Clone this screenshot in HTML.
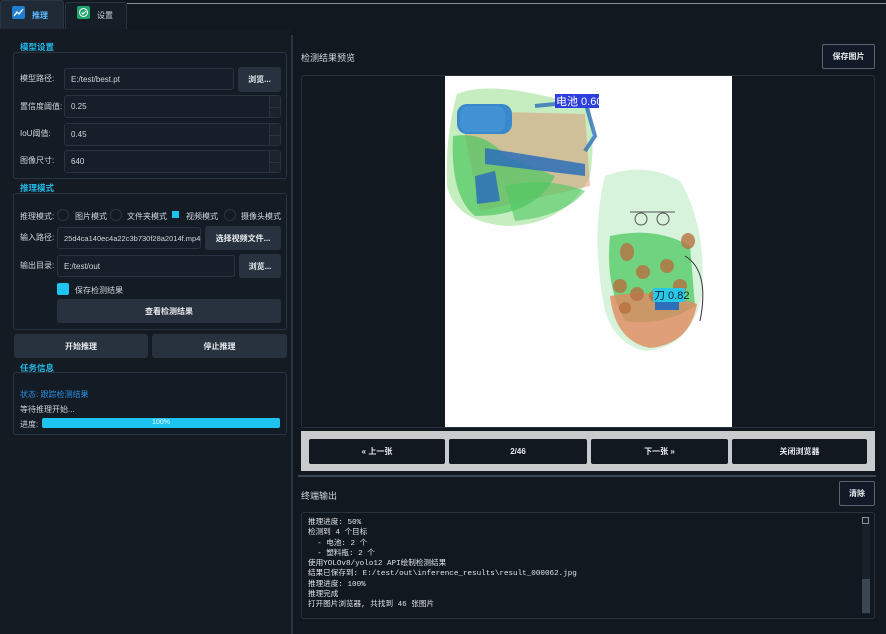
<!DOCTYPE html>
<html><head><meta charset="utf-8"><style>
*{box-sizing:border-box;margin:0;padding:0}
body{width:886px;height:634px;background:#111820;font-family:"Liberation Sans","Noto Sans CJK SC",sans-serif;color:#d8dde2;font-size:8px;position:relative;overflow:hidden}
.a{position:absolute}
.lbl{color:#1fb8e6;font-size:8.5px;font-weight:bold}
.box{border:1px solid #2a3440;border-radius:3px;background:#131b24}
.inp{background:#161f29;border:1px solid #2a3440;border-radius:3px;padding-left:6px;display:flex;align-items:center;font-size:8px;color:#d0d5da}
.btn{background:#28323e;border-radius:3px;display:flex;align-items:center;justify-content:center;font-size:8px;color:#e6eaee;font-weight:bold}
.spin{position:absolute;right:0;top:0;width:11px;height:100%;border-left:1px solid #2a3440;background:#1b242e}
.spin:after{content:"";position:absolute;left:0;right:0;top:50%;border-top:1px solid #2a3440}
.t{font-size:8px;color:#d0d5da}
.radio{width:12px;height:12px;border-radius:50%;border:1px solid #2a3440;background:#121a22}
.nb{background:#121820;border-radius:2px;display:flex;align-items:center;justify-content:center;color:#e6eaee;font-size:8px;font-weight:bold}
.mono{font-family:"Liberation Mono","Noto Sans CJK SC",monospace;font-size:7.6px;line-height:10.3px;color:#e0e4e8;white-space:pre}
</style></head><body>
<div class="a" style="left:127px;top:3px;width:759px;height:1px;background:#8a939c"></div>
<div class="a" style="left:0;top:0;width:64px;height:29px;background:#1f2a36;border:1px solid #2a3440;border-bottom:none;border-radius:3px 3px 0 0"></div>
<div class="a" style="left:12px;top:6px;width:13px;height:13px;background:#1e7fd0;border-radius:2px"><svg width="13" height="13"><path d="M2 10 L5 6 L7 8 L11 3" stroke="#fff" stroke-width="1.3" fill="none"/></svg></div>
<div class="a" style="left:32px;top:10px;color:#5ab8ff;font-weight:bold;font-size:8px">推理</div>
<div class="a" style="left:65px;top:2px;width:62px;height:27px;background:#151d26;border:1px solid #2a3440;border-bottom:none;border-radius:3px 3px 0 0"></div>
<div class="a" style="left:77px;top:6px;width:13px;height:13px;background:#1ea56e;border-radius:2px"><svg width="13" height="13"><circle cx="6.5" cy="6.5" r="4" stroke="#fff" fill="none" stroke-width="1"/><path d="M4.5 6.5 L6 8 L9 5" stroke="#fff" stroke-width="1.2" fill="none"/></svg></div>
<div class="a" style="left:97px;top:10px;color:#d0d5da;font-size:8px">设置</div>
<div class="a" style="left:0;top:29px;width:290px;height:605px;background:#141b23"></div>
<div class="a" style="left:291px;top:35px;width:2px;height:599px;background:#2c3642"></div>

<div class="a lbl" style="left:20px;top:41px">模型设置</div>
<div class="a box" style="left:13px;top:52px;width:274px;height:127px"></div>
<div class="a t" style="left:20px;top:73px">模型路径:</div>
<div class="a inp" style="left:64px;top:68px;width:170px;height:22px">E:/test/best.pt</div>
<div class="a btn" style="left:238px;top:67px;width:43px;height:25px">浏览...</div>
<div class="a t" style="left:20px;top:101px">置信度阈值:</div>
<div class="a inp" style="left:64px;top:95px;width:217px;height:23px">0.25<div class="spin"></div></div>
<div class="a t" style="left:20px;top:128px">IoU阈值:</div>
<div class="a inp" style="left:64px;top:123px;width:217px;height:23px">0.45<div class="spin"></div></div>
<div class="a t" style="left:20px;top:155px">图像尺寸:</div>
<div class="a inp" style="left:64px;top:150px;width:217px;height:23px">640<div class="spin"></div></div>

<div class="a lbl" style="left:20px;top:182px">推理模式</div>
<div class="a box" style="left:13px;top:193px;width:274px;height:137px"></div>
<div class="a t" style="left:20px;top:211px">推理模式:</div>
<div class="a radio" style="left:57px;top:209px"></div>
<div class="a t" style="left:75px;top:211px">图片模式</div>
<div class="a radio" style="left:110px;top:209px"></div>
<div class="a t" style="left:127px;top:211px">文件夹模式</div>
<div class="a" style="left:172px;top:211px;width:7px;height:7px;background:#1fc3ef"></div>
<div class="a t" style="left:186px;top:211px">视频模式</div>
<div class="a radio" style="left:224px;top:209px"></div>
<div class="a t" style="left:241px;top:211px">摄像头模式</div>
<div class="a t" style="left:20px;top:232px">输入路径:</div>
<div class="a inp" style="left:57px;top:227px;width:144px;height:22px;font-size:7.5px">25d4ca140ec4a22c3b730f28a2014f.mp4</div>
<div class="a btn" style="left:205px;top:226px;width:76px;height:24px">选择视频文件...</div>
<div class="a t" style="left:20px;top:260px">输出目录:</div>
<div class="a inp" style="left:57px;top:255px;width:178px;height:22px">E:/test/out</div>
<div class="a btn" style="left:239px;top:254px;width:42px;height:24px">浏览...</div>
<div class="a" style="left:57px;top:283px;width:12px;height:12px;background:#1fc3ef;border-radius:2px"></div>
<div class="a t" style="left:75px;top:285px">保存检测结果</div>
<div class="a btn" style="left:57px;top:299px;width:224px;height:24px">查看检测结果</div>

<div class="a btn" style="left:14px;top:334px;width:134px;height:24px">开始推理</div>
<div class="a btn" style="left:152px;top:334px;width:135px;height:24px">停止推理</div>

<div class="a lbl" style="left:20px;top:362px">任务信息</div>
<div class="a box" style="left:13px;top:372px;width:274px;height:63px"></div>
<div class="a" style="left:20px;top:389px;color:#2a8ee0;font-size:8px">状态: 跟踪检测结果</div>
<div class="a t" style="left:20px;top:404px">等待推理开始...</div>
<div class="a t" style="left:20px;top:419px">进度:</div>
<div class="a" style="left:42px;top:418px;width:238px;height:10px;background:#1fc3ef;border-radius:2px;color:#e8f8ff;font-size:7px;text-align:center;line-height:10px">100%</div>

<div class="a" style="left:301px;top:51px;font-size:9px;color:#d0d5da">检测结果预览</div>
<div class="a nb" style="left:822px;top:44px;width:53px;height:25px;border:1px solid #5a6470;background:#111a26">保存图片</div>
<div class="a" style="left:301px;top:75px;width:574px;height:353px;border:1px solid #28323c;border-radius:3px;background:#111820"></div>
<svg class="a" style="left:445px;top:76px" width="287" height="351" viewBox="0 0 287 351">
<rect width="287" height="351" fill="#fefefe"/>
<path d="M12 18 Q40 6 100 20 L145 30 Q150 70 145 100 Q120 150 60 150 Q10 145 2 110 Q0 60 12 18 Z" fill="#b8e8b0" opacity=".8"/>
<path d="M15 35 L140 38 L145 110 L35 135 Z" fill="#d89a78" opacity=".55"/>
<path d="M8 60 Q40 55 60 80 L110 100 Q90 140 30 140 Q5 120 8 60 Z" fill="#4cc860" opacity=".7"/>
<path d="M60 110 Q100 100 140 115 Q120 140 70 145Z" fill="#4cc860" opacity=".6"/>
<rect x="12" y="28" width="55" height="30" rx="10" fill="#3a88cc"/>
<rect x="15" y="30" width="45" height="26" rx="8" fill="#4a9ad8" opacity=".6"/>
<rect x="185" y="165" width="0" height="0"/>
<path d="M30 100 L50 95 L55 125 L32 128Z" fill="#2d6fb8" opacity=".85"/>
<path d="M40 72 L140 88 L140 100 L40 88 Z" fill="#2d6fb8" opacity=".85"/>
<path d="M90 30 L140 25 L150 60 L140 75" stroke="#2d6fb8" stroke-width="4" fill="none" opacity=".8"/>
<rect x="185" y="40" width="0" height="0"/>
<rect x="110" y="18" width="44" height="14" fill="#2c3ee0"/>
<text x="111" y="29" font-size="11" fill="#fff" font-family="Liberation Sans,Noto Sans CJK SC,sans-serif">电池 0.60</text>
<path d="M160 100 Q200 85 235 105 Q262 150 257 220 Q245 272 200 275 Q170 268 160 235 Q145 160 160 100 Z" fill="#cdf0d2" opacity=".8"/>
<path d="M165 160 Q210 150 245 170 L250 230 Q220 250 180 245 Q160 210 165 160Z" fill="#4cc860" opacity=".75"/>
<path d="M165 220 Q210 212 252 228 Q245 268 205 272 Q170 265 165 220Z" fill="#e08a60" opacity=".8"/>
<g fill="#b87040" opacity=".8"><ellipse cx="182" cy="176" rx="7" ry="9"/><ellipse cx="243" cy="165" rx="7" ry="8"/><circle cx="175" cy="210" r="7"/><circle cx="192" cy="218" r="7"/><circle cx="210" cy="220" r="6"/><circle cx="235" cy="210" r="7"/><circle cx="222" cy="190" r="7"/><circle cx="198" cy="196" r="7"/><circle cx="180" cy="232" r="6"/></g>
<path d="M185 136 L230 136" stroke="#555" stroke-width="1"/><circle cx="196" cy="143" r="6" fill="none" stroke="#555"/><circle cx="218" cy="143" r="6" fill="none" stroke="#555"/>
<path d="M240 180 Q265 195 255 245" stroke="#333" fill="none"/>
<rect x="208" y="212" width="32" height="14" fill="#28c8e8"/>
<text x="209" y="223" font-size="11" fill="#123" font-family="Liberation Sans,Noto Sans CJK SC,sans-serif">刀 0.82</text>
<rect x="210" y="226" width="24" height="8" fill="#2d6fb8"/>
</svg>
<div class="a" style="left:301px;top:431px;width:574px;height:40px;background:#c8cbce"></div>
<div class="a nb" style="left:309px;top:439px;width:136px;height:25px">« 上一张</div>
<div class="a nb" style="left:449px;top:439px;width:138px;height:25px">2/46</div>
<div class="a nb" style="left:591px;top:439px;width:137px;height:25px">下一张 »</div>
<div class="a nb" style="left:732px;top:439px;width:135px;height:25px">关闭浏览器</div>
<div class="a" style="left:298px;top:475px;width:578px;height:2px;background:#3a4654"></div>
<div class="a" style="left:301px;top:489px;font-size:9px;color:#d0d5da">终端输出</div>
<div class="a nb" style="left:839px;top:481px;width:36px;height:25px;border:1px solid #5a6470;background:#111a26">清除</div>
<div class="a" style="left:301px;top:512px;width:574px;height:107px;border:1px solid #28323c;border-radius:3px;background:#111820"></div>
<div class="a mono" style="left:308px;top:518px">推理进度: 50%
检测到 4 个目标
  - 电池: 2 个
  - 塑料瓶: 2 个
使用YOLOv8/yolo12 API绘制检测结果
结果已保存到: E:/test/out\inference_results\result_000062.jpg
推理进度: 100%
推理完成
打开图片浏览器, 共找到 46 张图片</div>
<div class="a" style="left:862px;top:517px;width:8px;height:97px;background:#182029"></div>
<div class="a" style="left:862px;top:517px;width:7px;height:7px;border:1px solid #8a939c"></div>
<div class="a" style="left:862px;top:579px;width:8px;height:34px;background:#3a4654"></div>
</body></html>
